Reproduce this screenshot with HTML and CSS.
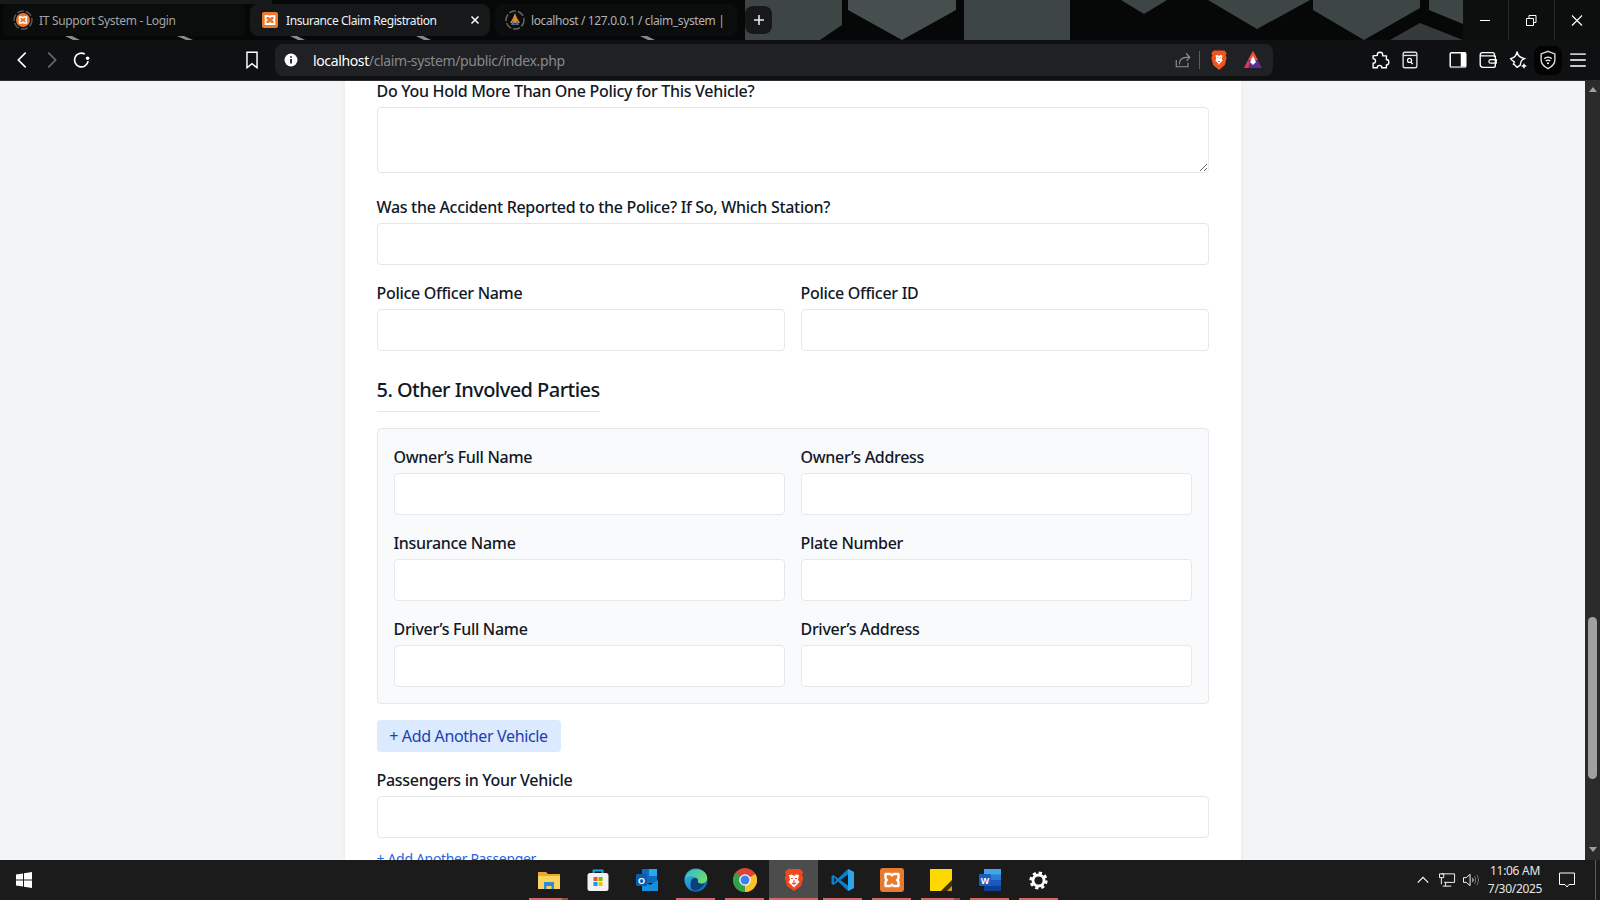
FILE: index.html
```html
<!DOCTYPE html>
<html lang="en">
<head>
<meta charset="utf-8">
<title>Insurance Claim Registration</title>
<link rel="stylesheet" href="styles.css">
</head>
<body>
<header class="chrome">
  <div class="titlebar">
    <svg class="wallpaper" width="1600" height="40" viewBox="0 0 1600 40">
      <rect width="1600" height="40" fill="#060707"/>
      <rect width="272" height="4" fill="#181919"/>
      <g fill="#3e4545">
        <polygon points="745,0 842,0 842,25 820,40 745,40"/>
        <polygon points="848,0 956,0 956,10 902,40 848,10" fill="#474f4e"/>
        <polygon points="964,0 1070,0 1070,40 964,40"/>
        <polygon points="1121,0 1167,0 1144,14"/>
        <polygon points="1208,0 1310,0 1257,29"/>
        <polygon points="1313,0 1420,0 1420,8 1364,40 1313,10"/>
        <polygon points="1429,0 1463,0 1463,24 1429,10"/>
        <polygon points="1390,40 1420,23 1463,40" fill="#343a3a"/>
        <polygon points="65,36 72,36 80,40 73,40" fill="#8a8a8a"/>
        <polygon points="177,36 184,36 193,40 186,40" fill="#8a8a8a"/>
        <polygon points="290,36 297,36 305,40 298,40" fill="#8a8a8a"/>
        <polygon points="416,36 423,36 431,40 424,40" fill="#8a8a8a"/>
        <polygon points="640,36 647,36 655,40 648,40" fill="#8a8a8a"/>
      </g>
      <rect x="1463" width="137" height="40" fill="#0d0e0e"/>
      <path d="M1508.500 0V40M1554.500 0V40" stroke="#2a2c2c"/>
    </svg>
    <nav class="tabs">
      <div class="tab">
        <svg class="fav" viewBox="0 0 20 20"><circle cx="10" cy="10" r="9" fill="none" stroke="#555" stroke-width="1.500" stroke-dasharray="7 2"/><circle cx="10" cy="10" r="7" fill="#e8782b"/><path d="M6.500 7h2.300l1.200.8 1.200-.8h2.300v2l-.8 1 .8 1v2h-2.300l-1.200-.8-1.200.8H6.500v-2l.8-1-.8-1z" fill="none" stroke="#fff" stroke-width="1.500"/></svg>
        <span class="tab-title">IT Support System - Login</span>
      </div>
      <div class="tab tab-active">
        <svg class="fav" viewBox="0 0 20 20"><rect x="2" y="2" width="16" height="16" rx="2" fill="#f0782a"/><path d="M5.500 6h3l1.500 1 1.500-1h3v3l-1 1 1 1v3h-3L10 13l-1.500 1h-3v-3l1-1-1-1z" fill="none" stroke="#fff" stroke-width="1.800"/></svg>
        <span class="tab-title">Insurance Claim Registration</span>
        <svg class="tab-close" viewBox="0 0 10 10"><path d="M1.500 1.500l7 7M8.500 1.500l-7 7" stroke="#fff" stroke-width="1.500"/></svg>
      </div>
      <div class="tab">
        <svg class="fav" viewBox="0 0 20 20"><circle cx="10" cy="10" r="9" fill="none" stroke="#666" stroke-width="1.500" stroke-dasharray="7 2"/><path d="M10 3l2 5 3 5H5l3-5z" fill="#e08a2c"/><path d="M6 15l2-5 2 5 2-5 2 5z" fill="#4a6fa5"/></svg>
        <span class="tab-title tab-fade">localhost / 127.0.0.1 / claim_system |</span>
      </div>
      <button class="newtab" type="button">
        <svg width="12" height="12" viewBox="0 0 12 12"><path d="M6 1v10M1 6h10" stroke="#e8e8e8" stroke-width="1.600"/></svg>
      </button>
    </nav>
    <div class="winctl">
      <svg class="winbtn" viewBox="0 0 46 40"><path d="M18 20.500h10" stroke="#fff"/></svg>
      <svg class="winbtn" viewBox="0 0 46 40"><path d="M18.500 18.500h7v7h-7zM21 18v-2.500h7v7h-2" fill="none" stroke="#fff"/></svg>
      <svg class="winbtn" viewBox="0 0 46 40"><path d="M18 15.500l10 10M28 15.500l-10 10" stroke="#fff" stroke-width="1.100"/></svg>
    </div>
  </div>
  <div class="toolbar">
    <div class="nav-left">
      <svg class="tool" viewBox="0 0 24 24"><path d="M16 4l-8 8 8 8" fill="none" stroke="#fff" stroke-width="1.800"/></svg>
      <svg class="tool" viewBox="0 0 24 24"><path d="M9 4l8 8-8 8" fill="none" stroke="#6a6c6e" stroke-width="1.800"/></svg>
      <svg class="tool" viewBox="0 0 24 24"><g transform="translate(1.500 0)"><path d="M15.750 5.500A7.500 7.500 0 1 0 19.400 13.300" fill="none" stroke="#fff" stroke-width="1.800"/><circle cx="18.800" cy="10" r="1.900" fill="#fff"/></g></svg>
    </div>
    <svg class="tool bookmark" viewBox="0 0 24 24"><path d="M6.500 3.500h11v17L12 16l-5.500 4.500z" fill="none" stroke="#fff" stroke-width="1.600"/></svg>
    <div class="address">
      <svg class="info" viewBox="0 0 16 16"><circle cx="8" cy="8" r="6.500" fill="#fff"/><path d="M8 7v4.500M8 4.300v1.500" stroke="#111" stroke-width="1.700"/></svg>
      <span class="url"><span class="url-host">localhost</span>/claim-system/public/index.php</span>
      <svg class="share" viewBox="0 0 20 20"><path d="M2.500 10v7.500h13V13" fill="none" stroke="#8c8f92" stroke-width="1.300"/><path d="M6 15c0-5 3-8 8-8h3M13.500 2.500L17.500 7l-3.500 4" fill="none" stroke="#8c8f92" stroke-width="1.300"/></svg>
      <span class="addr-div"></span>
      <svg class="brave-small" viewBox="0 0 20 24"><path d="M4 1.500h12l2.500 3-1 2.500 1 2.500-2 8L10 23l-6.500-5.500-2-8 1-2.500-1-2.500z" fill="#f1551f"/><path d="M6 7l2.500-.5L10 7.500l1.500-1L14 7l-1 4 1 1.500-3 3-1 2-1-2-3-3 1-1.500z" fill="#fff"/><path d="M8 9.500h1.200M10.800 9.500H12M9 13l1 1 1-1" stroke="#f1551f" stroke-width="1"/></svg>
      <svg class="rewards" viewBox="0 0 20 20"><polygon points="10,1 19,18 1,18" fill="#5c2d8f"/><polygon points="10,1 15,10 5,10" fill="#f2552c"/><polygon points="10,6 13,12 10,15 7,12" fill="#fff"/><polygon points="1,18 5,10 7,13 5,18" fill="#e0364f"/></svg>
    </div>
    <div class="nav-right">
      <svg class="tool" viewBox="0 0 24 24"><path d="M9 6.500c0-4 6-4 6 0v1h4v4c3.500 0 3.500 6 0 6v3h-5c0-3.500-5-3.500-5 0H4.500v-5c3.500 0 3.500-5 0-5V7.500L9 7z" fill="none" stroke="#fff" stroke-width="1.500"/></svg>
      <svg class="tool" viewBox="0 0 24 24"><rect x="4.500" y="3.500" width="15" height="17" rx="2" fill="none" stroke="#ddd" stroke-width="1.500"/><path d="M4.500 7h15" stroke="#ddd" stroke-width="1.500"/><circle cx="11.500" cy="12.500" r="2.200" fill="none" stroke="#fff" stroke-width="1.400"/><path d="M13 14.500l2 2" stroke="#fff" stroke-width="1.500"/></svg>
      <span class="tool-gap"></span>
      <svg class="tool" viewBox="0 0 24 24"><rect x="3.500" y="4" width="17" height="16" rx="1.500" fill="none" stroke="#fff" stroke-width="1.600"/><rect x="15" y="4" width="5.500" height="16" fill="#fff"/><path d="M3.500 20h17" stroke="#999" stroke-width="1.600"/></svg>
      <svg class="tool" viewBox="0 0 24 24"><path d="M19 8V6a2 2 0 0 0-2-2H6a2.500 2.500 0 0 0-2.500 2.500V17A3 3 0 0 0 6.500 20H18a2 2 0 0 0 2-2V8z" fill="none" stroke="#fff" stroke-width="1.500"/><path d="M3.500 7.500H20M15 11.500h6v4h-6a2 2 0 0 1 0-4z" fill="none" stroke="#fff" stroke-width="1.400"/></svg>
      <svg class="tool" viewBox="0 0 24 24"><path d="M11 3c1 5 3 6 8 7.500-3.500 1.500-4 3-4.500 7L11 20c-1-1-3-3-3-3l-1-.5L8 14c-2-1-3-2-4-3.500C8 9 10 8 11 3z" fill="none" stroke="#fff" stroke-width="1.500"/><path d="M18.500 16v5M16 18.500h5" stroke="#fff" stroke-width="1.600"/></svg>
      <span class="vpn"><svg class="tool" viewBox="0 0 24 24"><path d="M12 2.500l7.500 2.800v6.700c0 4.500-3.500 7.500-7.500 9.500-4-2-7.500-5-7.500-9.500V5.300z" fill="none" stroke="#ddd" stroke-width="1.500"/><path d="M8 10.500c2.500-2 5.500-2 8 0M9.500 13c1.500-1 3.500-1 5 0" fill="none" stroke="#fff" stroke-width="1.400"/><circle cx="12" cy="15.500" r="1.100" fill="#fff"/></svg></span>
      <svg class="tool" viewBox="0 0 24 24"><path d="M3.500 5.500h17M3.500 12h17M3.500 18.500h17" stroke="#c8c8c8" stroke-width="2"/></svg>
    </div>
  </div>
</header>

<div class="viewport">
  <main class="page">
    <form class="card">
      <label class="label" for="f1">Do You Hold More Than One Policy for This Vehicle?</label>
      <textarea class="field area" id="f1"></textarea>

      <label class="label" for="f2">Was the Accident Reported to the Police? If So, Which Station?</label>
      <input class="field" id="f2">

      <div class="grid">
        <div class="cell"><label class="label" for="f3">Police Officer Name</label><input class="field" id="f3"></div>
        <div class="cell"><label class="label" for="f4">Police Officer ID</label><input class="field" id="f4"></div>
      </div>

      <h2 class="section">5. Other Involved Parties</h2>

      <div class="panel">
        <div class="grid">
          <div class="cell"><label class="label" for="p1">Owner’s Full Name</label><input class="field" id="p1"></div>
          <div class="cell"><label class="label" for="p2">Owner’s Address</label><input class="field" id="p2"></div>
          <div class="cell"><label class="label" for="p3">Insurance Name</label><input class="field" id="p3"></div>
          <div class="cell"><label class="label" for="p4">Plate Number</label><input class="field" id="p4"></div>
          <div class="cell"><label class="label" for="p5">Driver’s Full Name</label><input class="field" id="p5"></div>
          <div class="cell"><label class="label" for="p6">Driver’s Address</label><input class="field" id="p6"></div>
        </div>
      </div>

      <button class="add-btn" type="button">+ Add Another Vehicle</button>

      <label class="label" for="f5">Passengers in Your Vehicle</label>
      <input class="field" id="f5">

      <a class="add-link" href="#">+ Add Another Passenger</a>
    </form>
  </main>
  <aside class="scrollbar">
    <span class="arrow-up"></span>
    <span class="scroll-track"><span class="thumb"></span></span>
    <span class="arrow-down"></span>
  </aside>
</div>

<footer class="taskbar">
  <div class="start">
    <svg width="18" height="18" viewBox="0 0 18 18"><polygon points="1,3.500 8,2.500 8,8.500 1,8.500" fill="#fff"/><polygon points="9,2.300 17,1 17,8.500 9,8.500" fill="#fff"/><polygon points="1,9.500 8,9.500 8,15.500 1,14.500" fill="#fff"/><polygon points="9,9.500 17,9.500 17,17 9,15.700" fill="#fff"/></svg>
  </div>
  <div class="apps">
    <div class="app app-on app-stack"><svg class="appicon" viewBox="0 0 24 24"><path d="M1 4h8l2 2h12v15H1z" fill="#e8a92c"/><path d="M1 8h22v13H1z" fill="#fbd35f"/><path d="M7 14h10v7h-2.500v-3h-5v3H7z" fill="#2b8dd6"/></svg></div>
    <div class="app"><svg class="appicon" viewBox="0 0 24 24"><path d="M7.500 6V2.500h9V6" fill="none" stroke="#1ea7e8" stroke-width="1.800"/><rect x="1.500" y="5" width="21" height="18" rx="2.500" fill="#f2f2f2"/><rect x="7.500" y="9" width="4" height="4" fill="#f25022"/><rect x="12.500" y="9" width="4" height="4" fill="#7fba00"/><rect x="7.500" y="14" width="4" height="4" fill="#00a4ef"/><rect x="12.500" y="14" width="4" height="4" fill="#ffb900"/></svg></div>
    <div class="app"><svg class="appicon" viewBox="0 0 24 24"><rect x="7" y="1" width="15" height="14" fill="#0f6cbd"/><rect x="14" y="1" width="8" height="7" fill="#28a8ea"/><path d="M7 12l8 5 8-5v11H7z" fill="#1490df"/><rect x="1" y="6" width="11" height="12" rx="1" fill="#0a5dad"/><text x="6.500" y="15.500" class="app-letter">O</text></svg></div>
    <div class="app app-on"><svg class="appicon" viewBox="0 0 24 24"><defs><linearGradient id="edgeA" x1="0" y1="0" x2="1" y2="1"><stop offset="0" stop-color="#35c1f1"/><stop offset="1" stop-color="#0a5ea8"/></linearGradient><linearGradient id="edgeB" x1="0" y1="0" x2="1" y2="0.600"><stop offset="0" stop-color="#2fb8d8"/><stop offset="1" stop-color="#6fdc6c"/></linearGradient></defs><circle cx="12" cy="12" r="11.500" fill="url(#edgeA)"/><path d="M1 11C3 3 12-1 19 3c4 2.500 5 7 3.500 10-2 3-7 3-8.500 1-.8-1 1-2.500-1-4C10 8 3 7 1 11z" fill="url(#edgeB)"/><path d="M7 14c0-3.500 4-5 6.500-3 1 1-.5 2.500 1 4 2 1.800 4.500 1 6 0-2 5-7 8-11 7.500C6.500 21 6 17 7 14z" fill="#0c3f78"/></svg></div>
    <div class="app app-on"><svg class="appicon" viewBox="0 0 24 24"><circle cx="12" cy="12" r="12" fill="#db4437"/><path d="M12 12l10.400-6A12 12 0 0 1 12 24z" fill="#fbc02d"/><path d="M12 12L12 24A12 12 0 0 1 1.600 18z" fill="#2fa34a"/><path d="M12 12L1.600 18A12 12 0 0 1 3 4.500z" fill="#2fa34a"/><circle cx="12" cy="12" r="5.800" fill="#fff"/><circle cx="12" cy="12" r="4.500" fill="#3f80f0"/></svg></div>
    <div class="app app-active"><svg class="appicon" viewBox="0 0 24 24"><path d="M6 1h12l3 3-1 3 1.200 3-2.200 8-7 5-7-5-2.200-8L4 7 3 4z" fill="#f3481f"/><path d="M7 7l3-.5L12 8l2-1.500 3 .5-1 5 1.500 2-3.500 3.500-2 2-2-2L6.500 14 8 12z" fill="#fff"/><path d="M9 10.500h1.800M13.200 10.500H15M10 15l2 1.200 2-1.200M12 12v4" stroke="#f3481f" stroke-width="1.100" fill="none"/></svg></div>
    <div class="app app-on"><svg class="appicon" viewBox="0 0 24 24"><path d="M17 1l6 3v16l-6 3L7 13.500 2.500 17 .500 16V8l2-1L7 10.500z" fill="#0a7fd0"/><path d="M17 1l6 3v16l-6 3z" fill="#2aa5ee"/><path d="M17 6.500v11L9.500 12z" fill="#1b1b1b"/><path d="M3 9.500v5L5.500 12z" fill="#1b1b1b"/></svg></div>
    <div class="app app-on"><svg class="appicon" viewBox="0 0 24 24"><rect width="24" height="24" rx="3" fill="#e8792f"/><path d="M5.500 6h5l1.500 1.500L13.500 6h5v4.500L17 12l1.500 1.500V18h-5L12 16.500 10.500 18h-5v-4.500L7 12l-1.500-1.500z" fill="none" stroke="#fff" stroke-width="2.400" stroke-linejoin="round"/></svg></div>
    <div class="app app-on app-stack"><svg class="appicon" viewBox="0 0 24 24"><path d="M1 1h22v15l-7 7H1z" fill="#ffd800"/><path d="M23 12v11H12z" fill="#d99f00"/><path d="M23 12L12 23h6l5-5z" fill="#3b3214"/></svg></div>
    <div class="app app-on"><svg class="appicon" viewBox="0 0 24 24"><rect x="6" y="1" width="17" height="22" rx="1" fill="#2b7cd3"/><rect x="6" y="1" width="17" height="5.500" fill="#41a5ee"/><rect x="6" y="12" width="17" height="5.500" fill="#185abd"/><rect x="6" y="17.500" width="17" height="5.500" fill="#103f91"/><rect x="1" y="6" width="12" height="12" rx="1" fill="#1a5cbf"/><text x="7" y="15.500" class="app-letter">W</text></svg></div>
    <div class="app app-on"><svg class="appicon appicon-sm" viewBox="0 0 24 24"><circle cx="12" cy="12" r="7" fill="none" stroke="#fff" stroke-width="3.600"/><circle cx="12" cy="12" r="9.800" fill="none" stroke="#fff" stroke-width="3.400" stroke-dasharray="4.100 3.600"/></svg></div>
  </div>
  <div class="tray">
    <svg class="tray-icon caret" viewBox="0 0 16 16"><path d="M2 11l6-6 6 6" fill="none" stroke="#fff" stroke-width="1.300"/></svg>
    <svg class="tray-icon net" viewBox="0 0 18 16"><path d="M2.500 1.500h14v9h-11M7 10.500v4M4 14.500h9M.500 1.500h4.500v4H.500zM2.500 5.500v7" fill="none" stroke="#fff" stroke-width="1"/></svg>
    <svg class="tray-icon vol" viewBox="0 0 18 16"><path d="M.500 5.500h3l4-3.500v12l-4-3.500h-3z" fill="none" stroke="#fff"/><path d="M10 6c1 1 1 3 0 4" fill="none" stroke="#fff"/><path d="M12 4c2 2 2 6 0 8M14.500 2.500c2.500 3 2.500 8 0 11" fill="none" stroke="#777"/></svg>
    <div class="clock"><span>11:06 AM</span><span>7/30/2025</span></div>
    <svg class="tray-icon note" viewBox="0 0 18 16"><path d="M1.500 1h15v11.500h-5.500L9 15l-2-2.500H1.500z" fill="none" stroke="#fff" stroke-width="1"/></svg>
    <span class="show-desktop"></span>
  </div>
</footer>
</body>
</html>
```

FILE: styles.css
```css
* { box-sizing: border-box; }
html, body { margin: 0; height: 100%; }
body {
  width: 1600px;
  height: 900px;
  display: flex;
  flex-direction: column;
  overflow: hidden;
  font-family: "Noto Sans", "Liberation Sans", sans-serif;
  background: #f3f4f6;
}

/* browser chrome */
.chrome { flex: none; background: #0f1011; border-bottom: 1px solid #2b2d2f; }
.titlebar { position: relative; height: 40px; display: flex; overflow: hidden; }
.wallpaper { position: absolute; left: 0; top: 0; }
.tabs { position: relative; display: flex; align-items: center; gap: 5px; padding-left: 3px; height: 40px; }
.tab {
  width: 242px;
  height: 32px;
  display: flex;
  align-items: center;
  gap: 6px;
  padding: 0 10px;
  border-radius: 8px;
  background: #0b0c0c;
  color: #a2a5a8;
  font-size: 12px;
  letter-spacing: -0.32px;
}
.tab-active { background: #17181a; color: #f2f2f2; width: 240px; letter-spacing: -0.42px; }
.fav { width: 20px; height: 20px; flex: none; }
.tab-title { flex: 1; white-space: nowrap; overflow: hidden; }
.tab-fade { color: #b0b3b6; letter-spacing: -0.38px; }
.tab-close { width: 10px; height: 10px; flex: none; }
.newtab {
  width: 27px;
  height: 28px;
  margin-left: 3px;
  padding: 0;
  border: 0;
  border-radius: 8px;
  background: #17181a;
  display: flex;
  align-items: center;
  justify-content: center;
}
.winctl { position: relative; margin-left: auto; display: flex; }
.winbtn { width: 46px; height: 40px; display: block; }

.toolbar { height: 40px; display: flex; align-items: center; }
.tool { width: 22px; height: 22px; flex: none; display: block; }
.nav-left { display: flex; align-items: center; gap: 7px; margin-left: 11px; }
.bookmark { margin-left: 150px; }
.address {
  width: 998px;
  height: 32px;
  margin-left: 12px;
  display: flex;
  align-items: center;
  padding: 0 1px 0 8px;
  border-radius: 8px;
  background: #202124;
}
.info { width: 16px; height: 16px; flex: none; }
.url { margin-left: 14px; flex: 1; font-size: 14px; letter-spacing: -0.37px; color: #85898d; white-space: nowrap; }
.url-host { color: #fff; }
.share { width: 18px; height: 18px; flex: none; }
.addr-div { width: 1px; height: 18px; background: #5a5d60; margin: 0 10px 0 7px; }
.brave-small { width: 18px; height: 22px; flex: none; }
.rewards { width: 20px; height: 20px; flex: none; margin: 0 9px 0 15px; }
.nav-right { display: flex; align-items: center; gap: 8px; margin-left: 96px; }
.tool-gap { width: 10px; }
.vpn {
  width: 28px;
  height: 29px;
  margin: 0 -3px;
  border-radius: 8px;
  background: #030303;
  display: flex;
  align-items: center;
  justify-content: center;
}

/* content */
.viewport { flex: 1; min-height: 0; display: flex; }
.page { flex: 1; min-width: 0; overflow: hidden; }
.card {
  width: 896px;
  margin: -2px auto 0;
  padding: 0 32px;
  background: #fff;
  box-shadow: 0 0 4px rgba(0, 0, 0, .05);
}
.label {
  display: block;
  height: 24px;
  margin-bottom: 4px;
  font-size: 16px;
  font-weight: 500;
  line-height: 24px;
  letter-spacing: -0.3px;
  color: #111827;
  white-space: nowrap;
}
.field {
  display: block;
  width: 100%;
  height: 42px;
  margin: 0 0 16px;
  padding: 8px 12px;
  background: #fff;
  border: 1px solid #e5e7eb;
  border-radius: 4px;
  font: inherit;
  outline: 0;
}
.area { height: 66px; margin-bottom: 22px; resize: vertical; }
.grid { display: grid; grid-template-columns: 1fr 1fr; column-gap: 16px; }
.section {
  display: table;
  margin: 9px 0 16px;
  padding-bottom: 7px;
  border-bottom: 1px solid #e5e7eb;
  font-size: 20px;
  font-weight: 500;
  line-height: 28px;
  letter-spacing: -0.55px;
  color: #111827;
}
.panel {
  padding: 16px 16px 0;
  background: #f9fafb;
  border: 1px solid #e5e7eb;
  border-radius: 4px;
}
.add-btn {
  display: block;
  height: 32px;
  width: 184px;
  margin: 16px 0;
  padding: 0;
  border: 0;
  border-radius: 4px;
  background: #dbeafe;
  color: #1e40af;
  font: inherit;
  font-size: 16px;
  letter-spacing: -0.34px;
  white-space: nowrap;
}
.add-link {
  display: block;
  margin-top: -7px;
  font-size: 14px;
  line-height: 24px;
  letter-spacing: -0.33px;
  color: #2563eb;
  text-decoration: none;
}

/* scrollbar */
.scrollbar { flex: none; width: 15px; background: #2b2b2b; display: flex; flex-direction: column; align-items: center; }
.arrow-up, .arrow-down { flex: none; width: 0; height: 0; border-left: 4.5px solid transparent; border-right: 4.5px solid transparent; }
.arrow-up { margin-top: 6px; border-bottom: 5px solid #a0a0a0; }
.arrow-down { margin-bottom: 8px; border-top: 5px solid #a0a0a0; }
.scroll-track { flex: 1; width: 100%; display: flex; flex-direction: column; justify-content: flex-end; padding: 0 3px 68px; }
.thumb { display: block; height: 162px; border-radius: 4.5px; background: #a0a0a0; }

/* taskbar */
.taskbar { flex: none; height: 40px; display: flex; align-items: stretch; background: #1b1b1b; position: relative; color: #fff; }
.start { width: 524px; padding: 11px 0 0 15px; }
.apps { display: flex; }
.app { width: 49px; height: 40px; display: flex; align-items: center; justify-content: center; position: relative; }
.app-on::after, .app-active::after {
  content: "";
  position: absolute;
  left: 5px;
  right: 5px;
  bottom: 0;
  height: 2px;
  background: #d36a6a;
}
.app-active { background: #4c4c4c; }
.app-active::after { left: 0; right: 0; }
.app-stack::before {
  content: "";
  position: absolute;
  right: 5px;
  width: 6px;
  bottom: 0;
  height: 2px;
  background: #8f4a4a;
  z-index: 1;
}
.appicon { width: 24px; height: 24px; display: block; }
.appicon-sm { width: 19px; height: 19px; }
.app-letter { font-family: "Liberation Sans", sans-serif; font-size: 9px; font-weight: 700; fill: #fff; text-anchor: middle; }
.tray { margin-left: auto; display: flex; align-items: center; position: relative; }
.tray-icon { display: block; flex: none; }
.caret { width: 14px; height: 14px; margin-right: 9px; }
.net { width: 17px; height: 16px; margin-right: 7px; }
.vol { width: 17px; height: 16px; margin-right: 4px; }
.clock {
  width: 62px;
  padding-bottom: 2px;
  display: flex;
  flex-direction: column;
  align-items: center;
  gap: 3px;
  font-size: 12px;
  line-height: 15px;
  letter-spacing: -0.3px;
  color: #e6e6e6;
  white-space: nowrap;
}
.note { width: 18px; height: 16px; margin: 0 19px 0 12px; }
.show-desktop { width: 1px; height: 40px; background: #5a5a5a; margin-right: 4px; }
```
